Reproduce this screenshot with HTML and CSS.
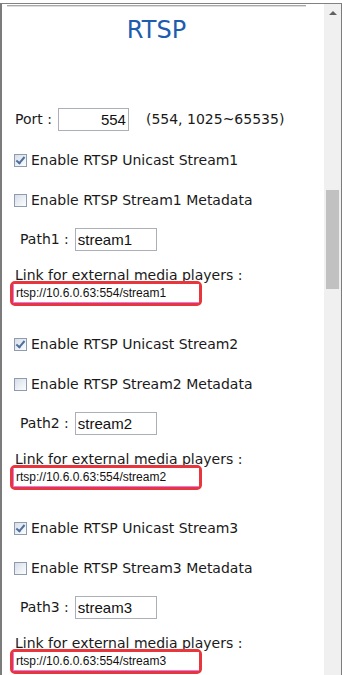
FILE: index.html
```html
<!DOCTYPE html>
<html lang="zh-CN">
<head>
    <meta charset="UTF-8">
    <title>RTSP</title>
    <link rel="stylesheet" href="styles.css">
</head>
<body>
    <!-- 外框 -->
    <div class="frame">
        <div class="content">
            <div class="panel">
                <div class="rule"></div>
                <h1 class="title">RTSP</h1>

                <!-- 端口 -->
                <div class="port-row">
                    <label for="port">Port :</label>
                    <input type="text" id="port" class="field port-field" value="554">
                    <span class="hint">(554, 1025~65535)</span>
                </div>

                <!-- Stream1 -->
                <div class="group">
                    <label class="check-row"><input type="checkbox" checked>Enable RTSP Unicast Stream1</label>
                    <label class="check-row"><input type="checkbox">Enable RTSP Stream1 Metadata</label>
                    <div class="path-row">
                        <label for="path1">Path1 :</label>
                        <input type="text" id="path1" class="field path-field" value="stream1">
                    </div>
                    <div class="link-label">Link for external media players :</div>
                    <div class="link-box"><input type="text" class="link-field" value="rtsp://10.6.0.63:554/stream1" readonly></div>
                </div>

                <!-- Stream2 -->
                <div class="group">
                    <label class="check-row"><input type="checkbox" checked>Enable RTSP Unicast Stream2</label>
                    <label class="check-row"><input type="checkbox">Enable RTSP Stream2 Metadata</label>
                    <div class="path-row">
                        <label for="path2">Path2 :</label>
                        <input type="text" id="path2" class="field path-field" value="stream2">
                    </div>
                    <div class="link-label">Link for external media players :</div>
                    <div class="link-box"><input type="text" class="link-field" value="rtsp://10.6.0.63:554/stream2" readonly></div>
                </div>

                <!-- Stream3 -->
                <div class="group">
                    <label class="check-row"><input type="checkbox" checked>Enable RTSP Unicast Stream3</label>
                    <label class="check-row"><input type="checkbox">Enable RTSP Stream3 Metadata</label>
                    <div class="path-row">
                        <label for="path3">Path3 :</label>
                        <input type="text" id="path3" class="field path-field" value="stream3">
                    </div>
                    <div class="link-label">Link for external media players :</div>
                    <div class="link-box"><input type="text" class="link-field" value="rtsp://10.6.0.63:554/stream3" readonly></div>
                </div>
            </div>
        </div>

        <!-- 滚动条 -->
        <div class="scrollbar">
            <div class="scroll-btn"><span class="arrow-up"></span></div>
            <div class="scroll-track"><div class="scroll-thumb"></div></div>
        </div>
    </div>
</body>
</html>
```

FILE: styles.css
```css
/* 全局样式 */
body {
    margin: 0;
    padding: 0;
    background: #fff;
    font-family: "DejaVu Sans", "Noto Sans CJK SC", sans-serif;
    font-size: 14px;
    color: #1a1a1a;
}

/* 外框 */
.frame {
    display: flex;
    margin-top: 3px;
    height: 672px;
    box-sizing: border-box;
    border-top: 1px solid #828282;
    border-left: 2px solid #7c7c7c;
    border-right: 1px solid #7c7c7c;
    overflow: hidden;
}

.content {
    flex: 1;
    overflow: hidden;
}

.panel {
    width: 299px;
    margin-left: 5px;
}

.rule {
    margin-top: 1px;
    height: 1px;
    background: #a8a8a8;
    border-bottom: 1px solid #dedede;
}

/* 标题 */
.title {
    margin: 8px 0 0;
    font-size: 24px;
    line-height: 30px;
    font-weight: normal;
    text-align: center;
    color: #1d5cae;
}

/* 输入框 */
.field {
    box-sizing: border-box;
    height: 23px;
    margin: 0 0 0 6px;
    padding: 0 2px;
    border: 1px solid #abb0b8;
    font-family: "Liberation Sans", sans-serif;
    font-size: 15px;
    color: #111;
    background: #fff;
    outline: none;
}

/* 端口 */
.port-row {
    display: flex;
    align-items: center;
    height: 42px;
    margin-top: 53px;
    padding-left: 8px;
}

.port-field {
    width: 71px;
    text-align: right;
}

.hint {
    margin-left: 17px;
}

/* 每组流设置 */
.group {
    height: 184px;
}

.check-row {
    display: flex;
    align-items: center;
    height: 40px;
    padding-left: 7px;
}

.check-row input {
    appearance: none;
    -webkit-appearance: none;
    position: relative;
    box-sizing: border-box;
    width: 13px;
    height: 13px;
    margin: 0 4px 0 0;
    border: 1px solid #8f9cb0;
    background: linear-gradient(135deg, #d6dee8 0%, #eef2f6 60%, #fbfcfd 100%);
}

.check-row input:checked::after {
    content: "";
    position: absolute;
    left: 3px;
    top: 0px;
    width: 3px;
    height: 7px;
    border-right: 2px solid #4f709e;
    border-bottom: 2px solid #4f709e;
    transform: rotate(40deg);
}

.path-row {
    display: flex;
    align-items: center;
    height: 38px;
    padding-left: 13px;
}

.path-field {
    width: 82px;
}

.link-label {
    margin-top: 10px;
    padding-left: 8px;
    line-height: 14px;
    height: 14px;
}

/* 红色标注框 */
.link-box {
    position: relative;
    width: 192px;
    height: 25px;
    box-sizing: border-box;
    margin: -1px 0 0 3px;
    border: 3px solid #e8363d;
    border-radius: 5px;
    background: #fff;
}

.link-field {
    display: block;
    box-sizing: border-box;
    width: 100%;
    height: 19px;
    margin: 0;
    padding: 0 0 0 2px;
    border: none;
    border-left: 1px solid #e27ce2;
    border-bottom: 1px solid #e27ce2;
    font-family: "Liberation Sans", sans-serif;
    font-size: 12px;
    color: #111;
    background: #fff;
    outline: none;
}

/* 滚动条 */
.scrollbar {
    width: 17px;
    display: flex;
    flex-direction: column;
    background: #f0f0f0;
}

.scroll-btn {
    height: 17px;
    display: flex;
    align-items: center;
    justify-content: center;
}

.arrow-up {
    width: 0;
    height: 0;
    border-left: 4px solid transparent;
    border-right: 4px solid transparent;
    border-bottom: 4px solid #606060;
}

.scroll-track {
    flex: 1;
}

.scroll-thumb {
    height: 99px;
    margin: 169px 2px 0 2px;
    background: #c1c1c1;
}
```
